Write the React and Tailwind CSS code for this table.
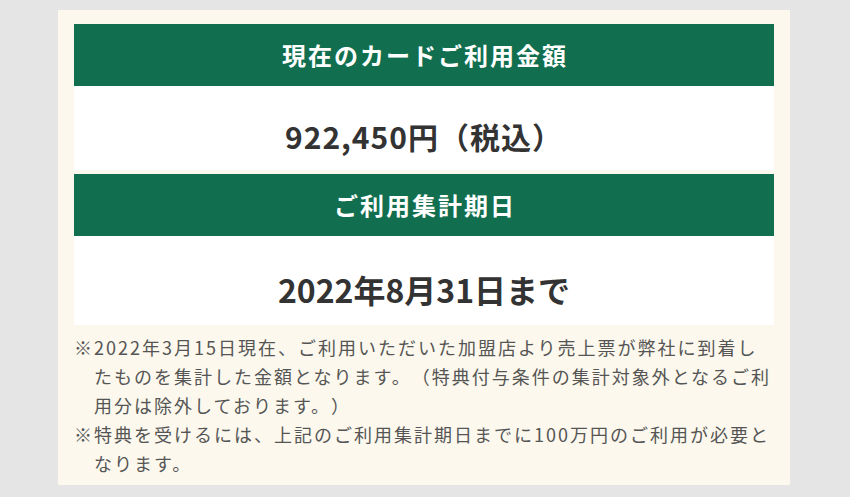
import React from 'react';

const jp = { fontFamily: '"Noto Sans CJK JP", "Noto Sans", sans-serif' };

function Heading({ children }) {
  return (
    <div className="h-[62px] bg-[#116f4f] flex items-center justify-center">
      <h2 className="text-white font-bold text-[24px] tracking-[2px] leading-none pl-[2px]">{children}</h2>
    </div>
  );
}

export default function App() {
  return (
    <div className="min-h-[497px] w-full bg-[#e5e5e5] pt-[10px] pb-[10px] [text-spacing-trim:space-all]" style={jp}>
      <div className="ml-[58px] w-[732px] bg-[#fcf8ed] px-4 pt-[14px] pb-[7px]">
        <Heading>現在のカードご利用金額</Heading>
        <div className="h-[84px] bg-white flex items-center justify-center pt-[16px]">
          <p className="text-[#333] font-bold text-[30px] leading-none tracking-[1px]">922,450円（税込）</p>
        </div>
        <div className="h-1" />
        <Heading>ご利用集計期日</Heading>
        <div className="h-[89px] bg-white flex items-center justify-center pt-[16px]">
          <p className="text-[#333] font-bold text-[32px] leading-none">2022年8月31日まで</p>
        </div>

        <div className="mt-[8px] text-[#555] text-[18px] tracking-[2px] leading-[29px]">
          <p className="pl-[20px] [text-indent:-20px]">
            ※2022年3月15日現在、ご利用いただいた加盟店より売上票が弊社に到着したものを集計した金額となります。（特典付与条件の集計対象外となるご利用分は除外しております。）
          </p>
          <p className="pl-[20px] [text-indent:-20px]">
            ※特典を受けるには、上記のご利用集計期日までに100万円のご利用が必要となります。
          </p>
        </div>
      </div>
    </div>
  );
}
